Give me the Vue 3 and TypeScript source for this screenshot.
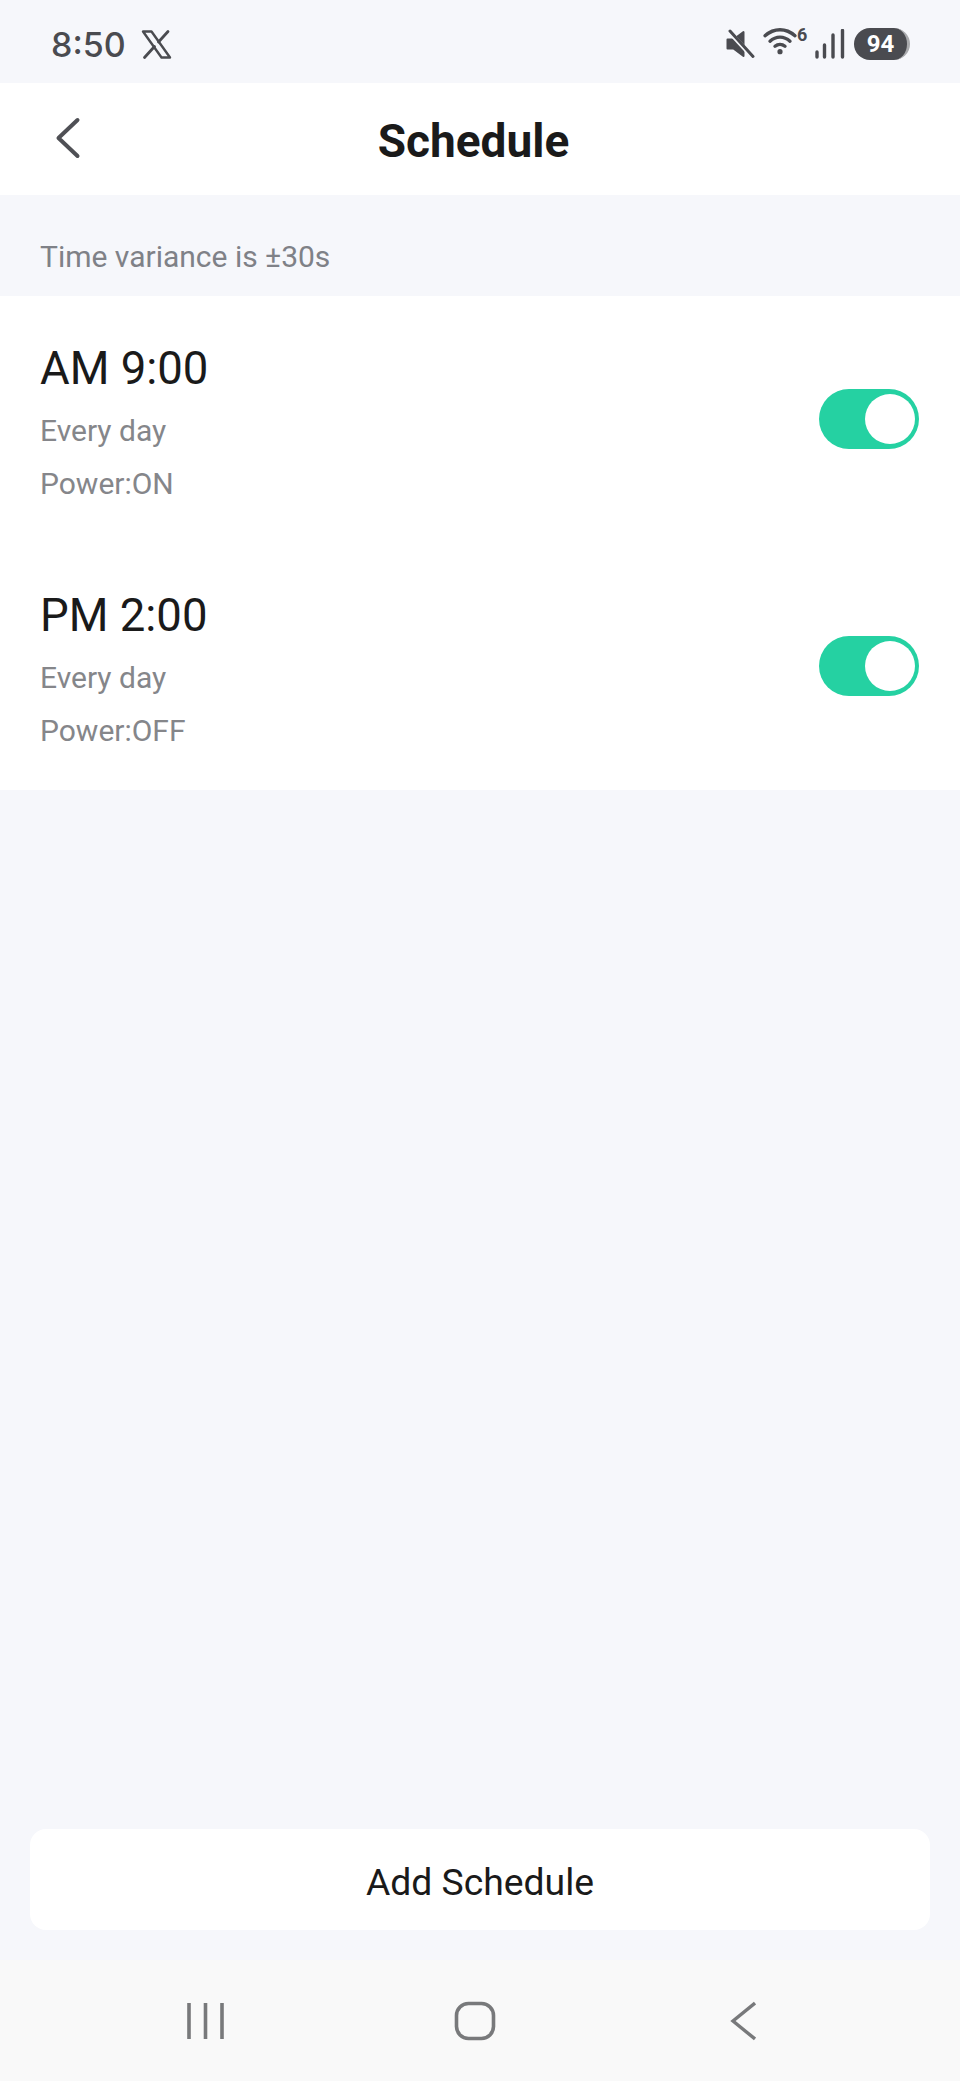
<template>
  <div class="page">
    <div class="status">
      <div class="status-left">
        <span class="clock">8:50</span>
        <svg class="x-logo" width="31" height="31" viewBox="0 0 31 31">
          <path d="M2 2.500h8.500l18.500 26h-8.500z" fill="none" stroke="#4a4b50" stroke-width="2.400" stroke-linejoin="round" />
          <path d="M27 2.500 17.500 13M13.500 17.500 3.500 28.500" fill="none" stroke="#4a4b50" stroke-width="2.800" stroke-linecap="round" />
        </svg>
      </div>
      <div class="status-right">
        <svg width="30" height="30" viewBox="0 0 30 30">
          <path d="M2.500 10.500h6l10-7.500v24l-10-7.500h-6z" fill="#4a4b50" stroke="#4a4b50" stroke-width="2" stroke-linejoin="round" />
          <path d="M3 1.500 28 28.500" stroke="#f6f7fb" stroke-width="4.500" />
          <path d="M5 2 28 27.500" stroke="#4a4b50" stroke-width="3" stroke-linecap="round" />
        </svg>
        <div class="wifi">
          <svg class="wifi-icon" width="34" height="30" viewBox="0 3.300 34 30">
            <path d="M2 10C11 2 23 2 32 10M7 15.500C13 10 21 10 27 15.500M12 20.500C15 18 19 18 22 20.500" fill="none" stroke="#4a4b50" stroke-width="3.400" stroke-linecap="round" />
            <circle cx="17" cy="26" r="2.600" fill="#4a4b50" />
          </svg>
          <span class="wifi-num">6</span>
        </div>
        <svg width="30" height="30" viewBox="0 0 30 30">
          <path d="M2 23v5M9.500 16v12M18 6v22M27.500 1.500V28" stroke="#4a4b50" stroke-width="3.400" stroke-linecap="round" />
        </svg>
        <div class="battery"><span>94</span></div>
      </div>
    </div>

    <header class="topbar">
      <svg class="back" width="26" height="42" viewBox="0 0 26 42">
        <path d="M22.500 3 3.500 21l19 18" fill="none" stroke="#4f5055" stroke-width="4" stroke-linecap="round" stroke-linejoin="round" />
      </svg>
      <h1>Schedule</h1>
    </header>

    <p class="note">Time variance is ±30s</p>

    <section class="list">
      <div v-for="item in schedules" :key="item.time" class="row">
        <div>
          <div class="time">{{ item.time }}</div>
          <div class="sub">{{ item.repeat }}</div>
          <div class="sub">{{ item.power }}</div>
        </div>
        <div class="switch"><span class="knob"></span></div>
      </div>
    </section>

    <div class="spacer"></div>

    <div class="add-wrap">
      <button class="add" type="button">Add Schedule</button>
    </div>

    <nav class="navbar">
      <svg width="42" height="40" viewBox="0 0 42 40">
        <path d="M4 2v36M20.500 2v36M37 2v36" stroke="#78797b" stroke-width="3.600" />
      </svg>
      <svg width="42" height="40" viewBox="0 0 42 40">
        <rect x="2.500" y="2.500" width="37" height="35" rx="12" fill="none" stroke="#78797b" stroke-width="3.600" />
      </svg>
      <svg class="nav-back" width="26" height="40" viewBox="0 0 26 40">
        <path d="M25 2 3 20l22 18" fill="none" stroke="#78797b" stroke-width="3.400" />
      </svg>
    </nav>
  </div>
</template>

<script setup lang="ts">
const schedules = [
  { time: 'AM 9:00', repeat: 'Every day', power: 'Power:ON' },
  { time: 'PM 2:00', repeat: 'Every day', power: 'Power:OFF' }
]
</script>

<style>
html,
body {
  margin: 0;
  background: #f6f7fb;
}
</style>

<style scoped>
.page {
  display: flex;
  flex-direction: column;
  width: 960px;
  height: 2081px;
  background: #f6f7fb;
  font-family: Roboto, "Liberation Sans", sans-serif;
}

.status {
  height: 83px;
  box-sizing: border-box;
  padding: 5px 50px 0 51px;
  display: flex;
  align-items: center;
  justify-content: space-between;
}

.status-left {
  display: flex;
  align-items: center;
  gap: 15px;
}

.clock {
  font-size: 34px;
  font-weight: 500;
  color: #4a4b50;
  font-family: Inter, Roboto, sans-serif;
}

.status-right {
  display: flex;
  align-items: center;
  gap: 8px;
}

.wifi {
  display: flex;
  align-items: flex-start;
  width: 44px;
  height: 30px;
}

.wifi-icon {
  overflow: visible;
}

.wifi-num {
  margin-top: -3px;
  font-size: 18px;
  font-weight: 700;
  color: #4a4b50;
  line-height: 18px;
}

.battery {
  width: 53px;
  height: 32px;
  margin-left: 1px;
  border-radius: 16px;
  background: #4a4b50;
  border-right: 3px solid #a9aaad;
  color: #fff;
  font-size: 24px;
  font-weight: 700;
  display: flex;
  align-items: center;
  justify-content: center;
}

.topbar {
  position: relative;
  height: 112px;
  box-sizing: border-box;
  padding: 3px 13px 0 0;
  background: #fff;
  display: flex;
  align-items: center;
  justify-content: center;
}

.back {
  position: absolute;
  left: 55px;
  top: 34px;
}

h1 {
  margin: 0;
  font-size: 46px;
  font-weight: 700;
  color: #1a1a1a;
}

.note {
  margin: 0;
  height: 101px;
  box-sizing: border-box;
  padding: 44px 40px 0;
  font-size: 30px;
  line-height: 36px;
  color: #7f8187;
}

.list {
  background: #fff;
}

.row {
  height: 247px;
  box-sizing: border-box;
  padding: 37px 41px 0 40px;
  display: flex;
  justify-content: space-between;
}

.time {
  font-size: 45.500px;
  line-height: 71px;
  color: #1a1a1a;
}

.sub {
  font-size: 30px;
  line-height: 53px;
  color: #85868a;
}

.switch {
  width: 100px;
  height: 60px;
  margin-top: 56px;
  border-radius: 30px;
  background: #25d1a2;
  display: flex;
  align-items: center;
  justify-content: flex-end;
  padding: 0 4px;
  box-sizing: border-box;
}

.knob {
  width: 50px;
  height: 50px;
  border-radius: 50%;
  background: #fff;
}

.spacer {
  flex: 1;
}

.add-wrap {
  padding: 0 30px 30px;
}

.add {
  display: block;
  width: 100%;
  height: 101px;
  padding: 4px 0 0;
  border: none;
  border-radius: 16px;
  background: #fff;
  font-family: inherit;
  font-size: 37.300px;
  color: #1a1a1a;
}

.navbar {
  height: 121px;
  background: #f9f9f9;
  display: flex;
  align-items: center;
  gap: 227px;
  padding: 0 0 0 185px;
}

.nav-back {
  margin-left: 7px;
}
</style>
